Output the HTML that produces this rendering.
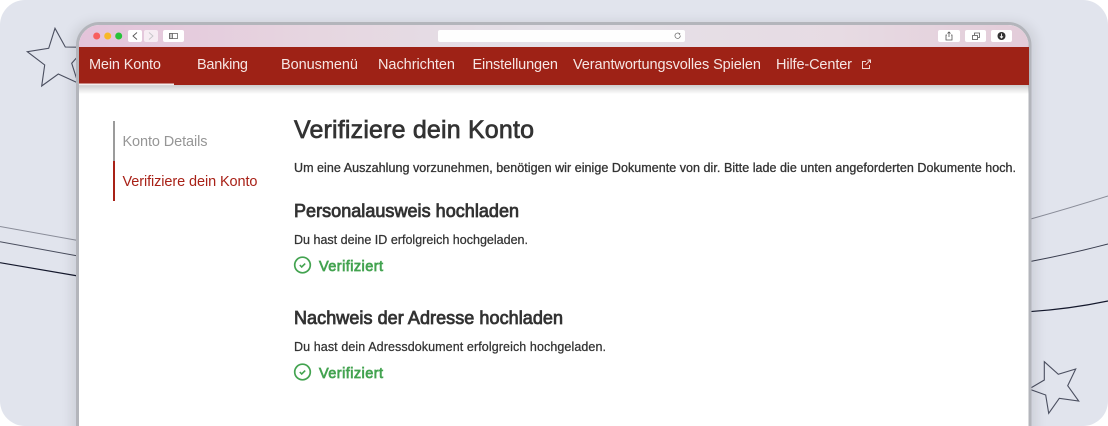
<!DOCTYPE html>
<html lang="de">
<head>
<meta charset="utf-8">
<title>Verifiziere dein Konto</title>
<style>
html,body{margin:0;padding:0;background:#fff;width:1108px;height:426px;overflow:hidden}
svg{display:block;filter:blur(.3px)}
text{font-family:"Liberation Sans",sans-serif}
</style>
</head>
<body>
<svg width="1108" height="426" viewBox="0 0 1108 426" xmlns="http://www.w3.org/2000/svg">
<defs>
<linearGradient id="bar" x1="0" x2="1" y1="0" y2="0">
<stop offset="0" stop-color="#e4c3da"/>
<stop offset=".25" stop-color="#e6d6e0"/>
<stop offset=".5" stop-color="#e4e1e8"/>
<stop offset=".8" stop-color="#e7dbe3"/>
<stop offset="1" stop-color="#e3ccd9"/>
</linearGradient>
<linearGradient id="navsh" x1="0" x2="0" y1="0" y2="1">
<stop offset="0" stop-color="#000" stop-opacity=".2"/>
<stop offset="1" stop-color="#000" stop-opacity="0"/>
</linearGradient>
<filter id="fs" x="-5%" y="-10%" width="110%" height="120%"><feGaussianBlur stdDeviation="6"/></filter>
</defs>

<rect x="0" y="0" width="1108" height="426" rx="25" fill="#e1e4ed"/>

<!-- background lines -->
<path d="M0 226.500 L78 240.500" fill="none" stroke="#8a8d99" stroke-width="1"/>
<path d="M0 241.700 L78 256" fill="none" stroke="#4a4e5e" stroke-width="1"/>
<path d="M0 262.700 L78 276" fill="none" stroke="#14182c" stroke-width="1.200"/>
<path d="M1029 219.500 Q1070 208 1108 196" fill="none" stroke="#8a8d99" stroke-width="1"/>
<path d="M1029 261.700 Q1070 254 1108 244" fill="none" stroke="#3b3f50" stroke-width="1"/>
<path d="M1029 311.700 Q1070 309 1108 301" fill="none" stroke="#14182c" stroke-width="1.200"/>

<!-- stars -->
<path d="M55 28.300 L65.300 47 L86 47.300 L71.700 63.300 L78 83 L58.300 74 L41.700 86 L44.700 65 L27.300 51.700 L48.700 48.300 Z" fill="none" stroke="#4b4f60" stroke-width="1.100"/>
<path d="M1044.300 361.700 L1058.300 374.300 L1075.700 369 L1067.700 385.700 L1078.700 401 L1059.300 398.300 L1048.700 413.300 L1045.700 395 L1029 389 L1044.300 380 Z" fill="none" stroke="#4b4f60" stroke-width="1.100"/>

<!-- frame -->
<path d="M72 440 V46 Q72 22 98 22 H1010 Q1036 22 1036 46 V440 Z" fill="#000" opacity=".09" filter="url(#fs)"/>
<path d="M77.500 430 V45.500 A22 22 0 0 1 99.500 23.500 H1008 A22 22 0 0 1 1030 45.500 V430 Z" fill="#fff" stroke="#b3b5bb" stroke-width="3"/>
<path d="M79 47 V45.500 A20.500 20.500 0 0 1 99.500 25 H1008 A20.500 20.500 0 0 1 1028.500 45.500 V47 Z" fill="url(#bar)"/>

<!-- window controls -->
<circle cx="96.700" cy="36" r="3.500" fill="#f85e5e"/>
<circle cx="107.700" cy="36" r="3.500" fill="#f8b827"/>
<circle cx="118.700" cy="36" r="3.500" fill="#27c23a"/>
<rect x="128" y="30" width="14" height="12" rx="2" fill="#fff"/>
<rect x="144" y="30" width="14" height="12" rx="2" fill="#fff" opacity=".65"/>
<rect x="163" y="30" width="21" height="12" rx="2" fill="#fff"/>
<path d="M137 32.500 L133 36 L137 39.500" fill="none" stroke="#555" stroke-width=".9"/>
<path d="M149 32.500 L153 36 L149 39.500" fill="none" stroke="#c5c5c8" stroke-width=".9"/>
<rect x="169.500" y="33.500" width="8" height="5" fill="#fff" stroke="#666" stroke-width=".8"/>
<rect x="169.500" y="33.500" width="3" height="5" fill="#ccc" stroke="#666" stroke-width=".8"/>

<!-- address bar -->
<rect x="438" y="30" width="247" height="12" rx="2" fill="#fff" opacity=".95"/>
<path d="M679.500 33.800 A2.700 2.700 0 1 0 680.300 35.500" fill="none" stroke="#666" stroke-width=".7"/>
<path d="M678.500 33 L680 33.800 L679 35" fill="none" stroke="#666" stroke-width=".6"/>

<!-- right buttons -->
<rect x="938" y="30" width="22" height="12" rx="2" fill="#fff"/>
<rect x="965" y="30" width="21" height="12" rx="2" fill="#fff"/>
<rect x="991" y="30" width="21" height="12" rx="2" fill="#fff"/>
<path d="M947 35 H946 V40 H952 V35 H951 M949 37 V32 M947.500 33.500 L949 32 L950.500 33.500" fill="none" stroke="#555" stroke-width=".8"/>
<rect x="972.500" y="35.500" width="5" height="4" fill="none" stroke="#555" stroke-width=".8"/>
<path d="M974.500 35 V33 H979.500 V37.500 H978" fill="none" stroke="#555" stroke-width=".8"/>
<circle cx="1001.500" cy="36" r="4" fill="#333"/>
<path d="M1001.500 33.500 V37.500 M1000 36.300 L1001.500 38 L1003 36.300" fill="none" stroke="#fff" stroke-width=".9"/>

<!-- nav -->
<rect x="79" y="85" width="950" height="9" fill="url(#navsh)"/>
<rect x="79" y="47" width="950" height="38" fill="#9e2216"/>
<rect x="79" y="83.500" width="95" height="1.700" fill="#f3ecec"/>
<g fill="#f6e6e4" font-size="14.500">
<text x="89" y="69" textLength="72" lengthAdjust="spacing">Mein Konto</text>
<text x="197" y="69" textLength="51" lengthAdjust="spacing">Banking</text>
<text x="281" y="69" textLength="77" lengthAdjust="spacing">Bonusmenü</text>
<text x="378" y="69" textLength="77" lengthAdjust="spacing">Nachrichten</text>
<text x="472.500" y="69" textLength="85.500" lengthAdjust="spacing">Einstellungen</text>
<text x="573" y="69" textLength="188" lengthAdjust="spacing">Verantwortungsvolles Spielen</text>
<text x="776" y="69" textLength="76" lengthAdjust="spacing">Hilfe-Center</text>
</g>
<path d="M866 61.500 H862.500 V68.500 H869.500 V65" fill="none" stroke="#f0d5d2" stroke-width="1"/>
<path d="M865.500 65 L870.500 60 M867.500 60 H870.500 V63" fill="none" stroke="#f0d5d2" stroke-width="1"/>

<!-- sidebar -->
<rect x="113" y="121" width="2" height="40" fill="#9b9b9b"/>
<rect x="113" y="161" width="2" height="40" fill="#a82117"/>
<text x="122.500" y="146" font-size="14.500" fill="#969696" textLength="85" lengthAdjust="spacing">Konto Details</text>
<text x="122.500" y="186" font-size="14.500" fill="#a82117" textLength="135" lengthAdjust="spacing">Verifiziere dein Konto</text>

<!-- main -->
<text x="294" y="138" font-size="25" fill="#333" stroke="#333" stroke-width=".7" textLength="240" lengthAdjust="spacing">Verifiziere dein Konto</text>
<text x="294" y="172" font-size="12.500" fill="#333" stroke="#333" stroke-width=".3" textLength="722" lengthAdjust="spacing">Um eine Auszahlung vorzunehmen, benötigen wir einige Dokumente von dir. Bitte lade die unten angeforderten Dokumente hoch.</text>

<text x="294" y="217" font-size="18" fill="#333" stroke="#333" stroke-width=".8" textLength="225" lengthAdjust="spacing">Personalausweis hochladen</text>
<text x="294" y="244" font-size="12.500" fill="#333" stroke="#333" stroke-width=".25" textLength="234" lengthAdjust="spacing">Du hast deine ID erfolgreich hochgeladen.</text>
<circle cx="302.500" cy="265" r="7.800" fill="none" stroke="#43a350" stroke-width="1.700"/>
<path d="M299.800 265 L301.700 267 L305.200 263.600" fill="none" stroke="#43a350" stroke-width="1.600"/>
<text x="319" y="271" font-size="14.500" fill="#43a350" stroke="#43a350" stroke-width=".7" textLength="64" lengthAdjust="spacing">Verifiziert</text>

<text x="294" y="324" font-size="18" fill="#333" stroke="#333" stroke-width=".8" textLength="269" lengthAdjust="spacing">Nachweis der Adresse hochladen</text>
<text x="294" y="351" font-size="12.500" fill="#333" stroke="#333" stroke-width=".25" textLength="312" lengthAdjust="spacing">Du hast dein Adressdokument erfolgreich hochgeladen.</text>
<circle cx="302.500" cy="372" r="7.800" fill="none" stroke="#43a350" stroke-width="1.700"/>
<path d="M299.800 372 L301.700 374 L305.200 370.600" fill="none" stroke="#43a350" stroke-width="1.600"/>
<text x="319" y="378" font-size="14.500" fill="#43a350" stroke="#43a350" stroke-width=".7" textLength="64" lengthAdjust="spacing">Verifiziert</text>
</svg>
</body>
</html>
